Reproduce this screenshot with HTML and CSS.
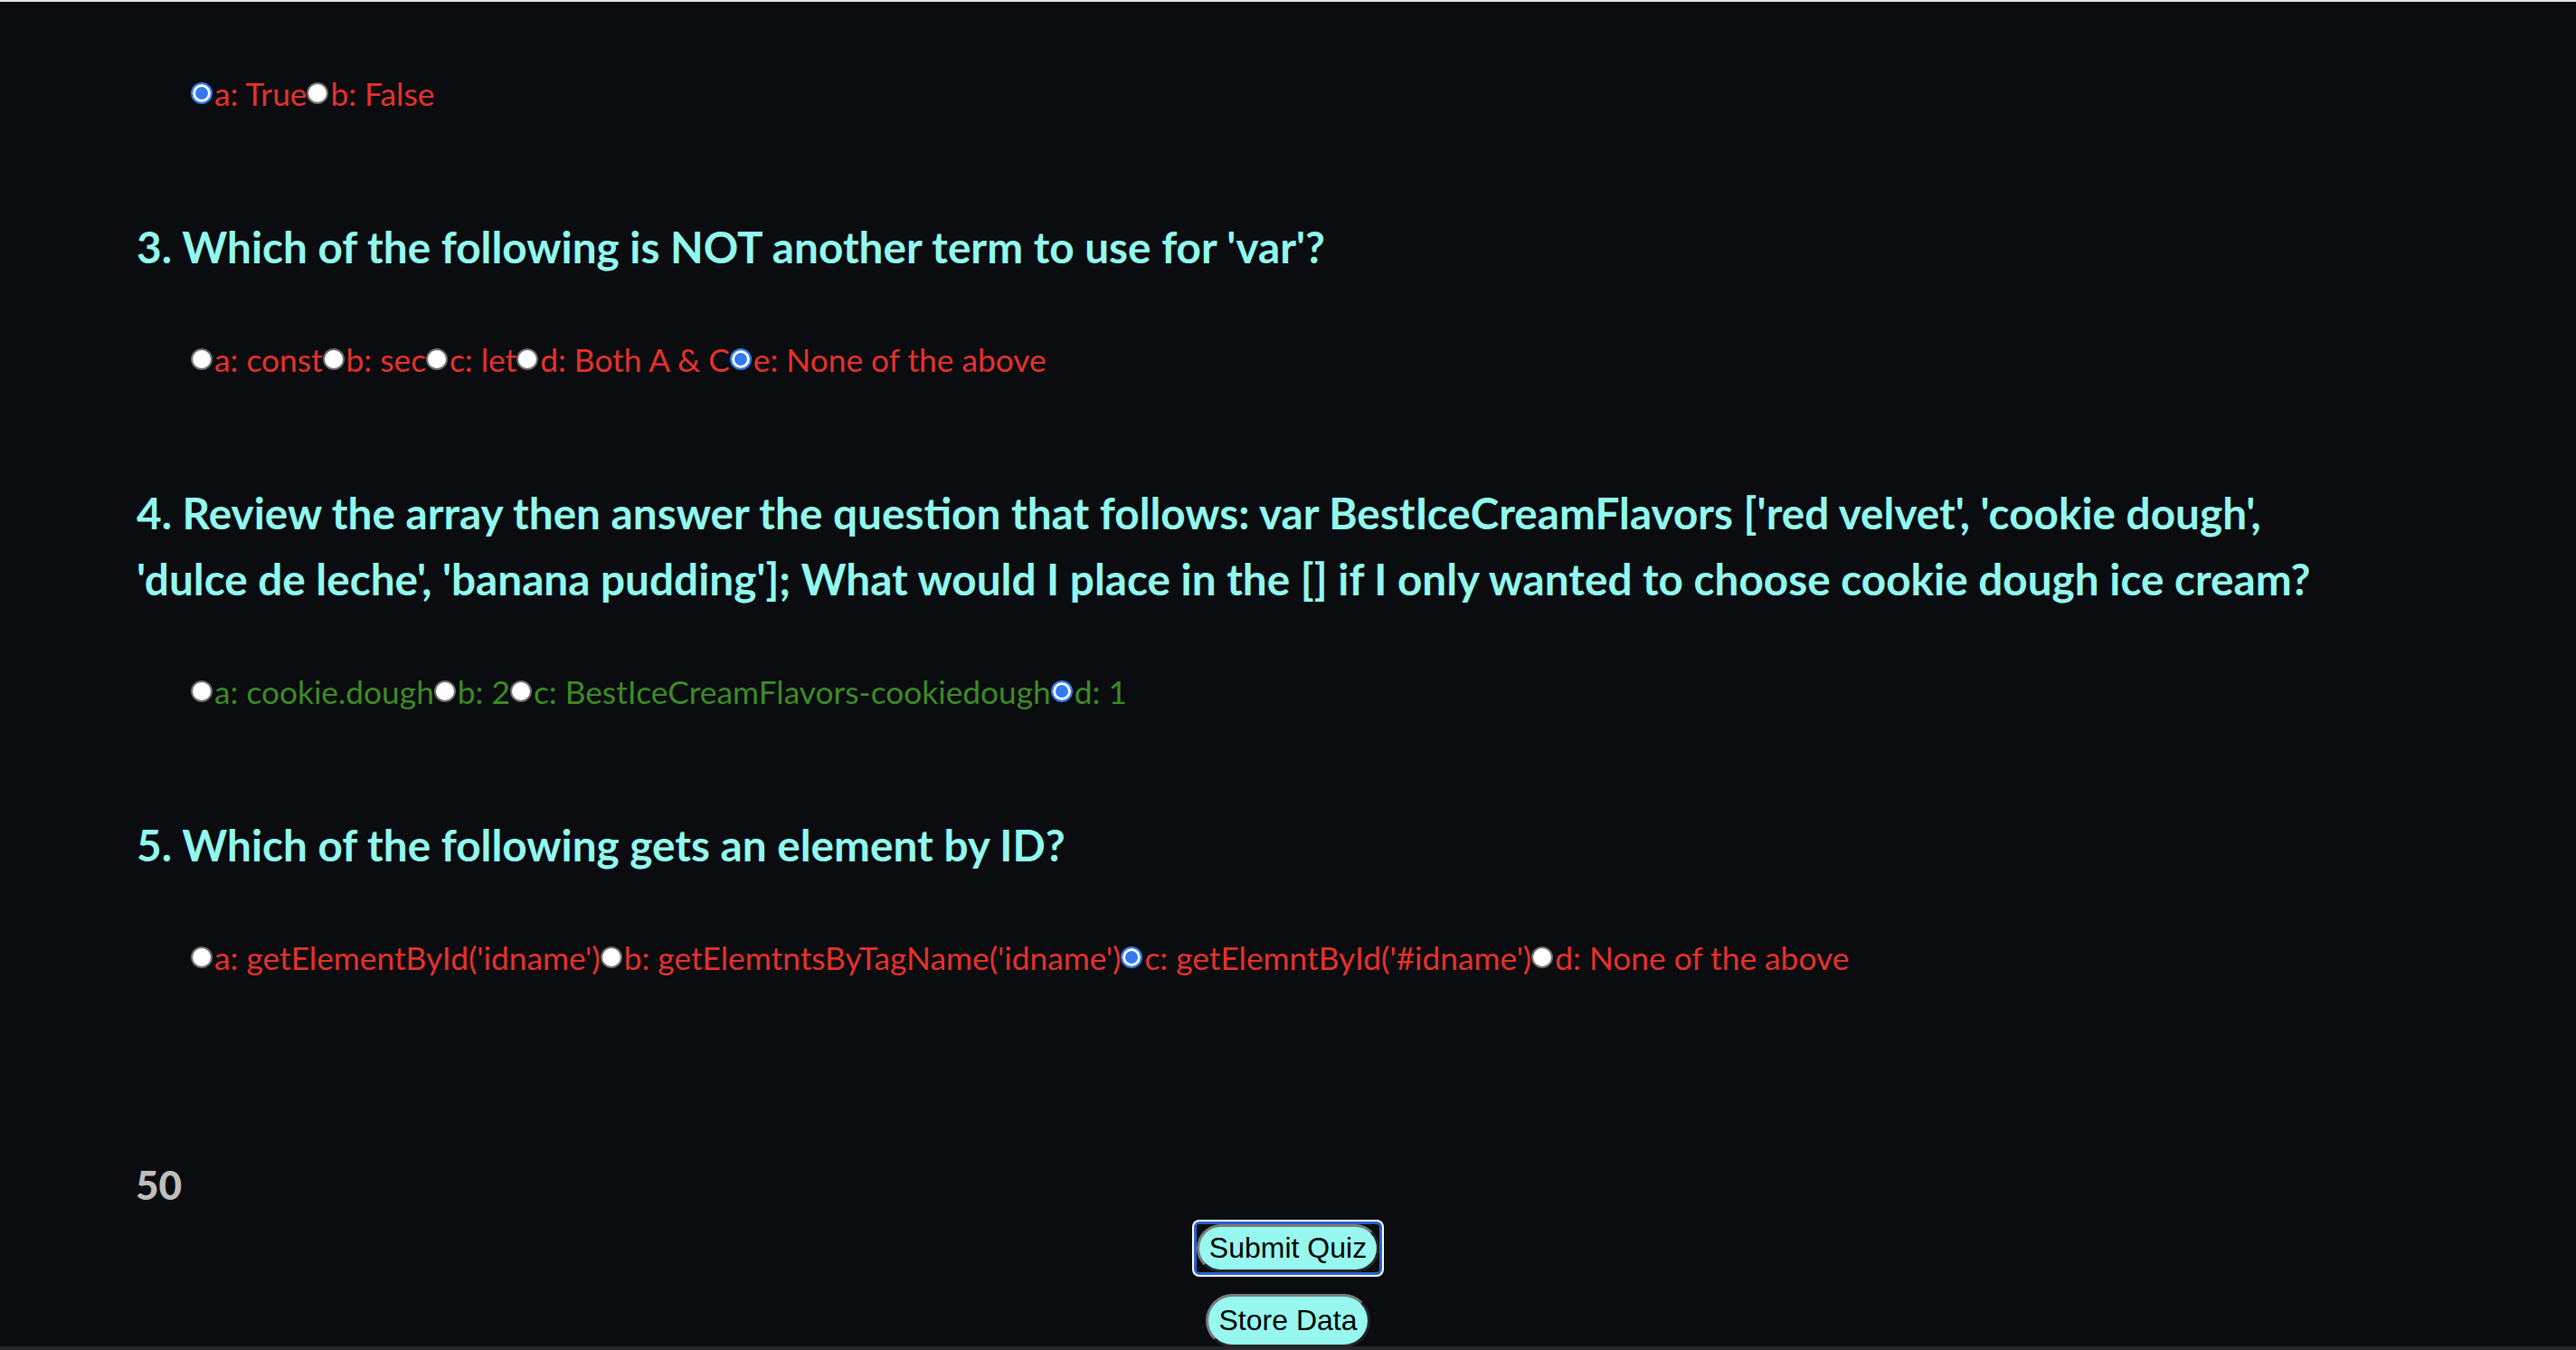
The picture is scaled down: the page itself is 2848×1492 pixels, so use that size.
FILE: index.html
```html
<!DOCTYPE html>
<html lang="en">
<head>
<meta charset="utf-8">
<title>Quiz</title>
<link rel="stylesheet" href="styles.css">
</head>
<body>
<div class="top-strip"></div>
<main class="quiz">
  <section class="question">
    <div class="answers red">
      <label class="opt"><input type="radio" name="q2" checked>a: True</label><label class="opt"><input type="radio" name="q2">b: False</label>
    </div>
  </section>
  <section class="question">
    <h2 class="q-title">3. Which of the following is NOT another term to use for 'var'?</h2>
    <div class="answers red">
      <label class="opt"><input type="radio" name="q3">a: const</label><label class="opt"><input type="radio" name="q3">b: sec</label><label class="opt"><input type="radio" name="q3">c: let</label><label class="opt"><input type="radio" name="q3">d: Both A &amp; C</label><label class="opt"><input type="radio" name="q3" checked>e: None of the above</label>
    </div>
  </section>
  <section class="question">
    <h2 class="q-title">4. Review the array then answer the question that follows: var BestIceCreamFlavors ['red velvet', 'cookie dough', 'dulce de leche', 'banana pudding']; What would I place in the [] if I only wanted to choose cookie dough ice cream?</h2>
    <div class="answers green">
      <label class="opt"><input type="radio" name="q4">a: cookie.dough</label><label class="opt"><input type="radio" name="q4">b: 2</label><label class="opt"><input type="radio" name="q4">c: BestIceCreamFlavors-cookiedough</label><label class="opt"><input type="radio" name="q4" checked>d: 1</label>
    </div>
  </section>
  <section class="question">
    <h2 class="q-title">5. Which of the following gets an element by ID?</h2>
    <div class="answers red">
      <label class="opt"><input type="radio" name="q5">a: getElementById('idname')</label><label class="opt"><input type="radio" name="q5">b: getElemtntsByTagName('idname')</label><label class="opt"><input type="radio" name="q5" checked>c: getElemntById('#idname')</label><label class="opt"><input type="radio" name="q5">d: None of the above</label>
    </div>
  </section>
</main>
<div class="score">50</div>
<div class="actions">
  <span class="focus-ring"><button class="btn" type="button">Submit Quiz</button></span>
  <button class="btn btn-tall" type="button">Store Data</button>
</div>
<div class="bottom-strip"></div>
</body>
</html>
```
FILE: styles.css
```css
html, body {
  margin: 0;
  padding: 0;
  background: #0b0c10;
}

body {
  font-family: "Lato", "Noto Sans", sans-serif;
  height: 1492px;
  overflow: hidden;
}

.top-strip {
  height: 2px;
  background: #e4e4e7;
}

.quiz {
  display: flex;
  flex-direction: column;
  gap: 113px;
  padding: 81px 0 0 151px;
}

.question {
  display: flex;
  flex-direction: column;
  gap: 68px;
}

.q-title {
  margin: 0;
  max-width: 2440px;
  font-size: 47.7px;
  font-weight: 700;
  line-height: 73px;
  color: #92f8ee;
}

.answers {
  display: flex;
  align-items: center;
  height: 40px;
  padding-left: 60px;
  font-size: 35.3px;
  white-space: nowrap;
}

.red { color: #e5322b; }
.green { color: #3c8b25; }

.opt {
  display: inline-flex;
  align-items: center;
}

.opt input {
  appearance: none;
  -webkit-appearance: none;
  width: 24px;
  height: 24px;
  margin: 0 2px 0 0;
  border-radius: 50%;
  background: #ffffff;
  border: 2px solid #6e6e6e;
  box-sizing: border-box;
}

.opt input:checked {
  background: #3478f6;
  border: 2px solid #3478f6;
  box-shadow: inset 0 0 0 3px #ffffff;
}

.score {
  margin: 206px 0 0 150px;
  font-size: 44px;
  font-weight: 900;
  line-height: 50px;
  color: #bebebe;
}

.actions {
  display: flex;
  flex-direction: column;
  align-items: center;
  gap: 21px;
  margin-top: 16px;
}

.focus-ring {
  display: inline-flex;
  border: 3px solid #2862c9;
  border-radius: 6px;
  box-shadow: 0 0 0 2px #ffffff;
  background: #0b0c10;
}

.btn {
  font-family: "Liberation Sans", Arial, sans-serif;
  font-size: 32px;
  line-height: 37px;
  padding: 5px 11px;
  color: #000000;
  background: #96f8ee;
  border: 3px outset #7a7a7a;
  border-radius: 30px;
}

.btn-tall {
  padding: 8px 12px;
}

.bottom-strip {
  position: fixed;
  left: 0;
  right: 0;
  bottom: 0;
  height: 4px;
  background: #26272b;
}
```
